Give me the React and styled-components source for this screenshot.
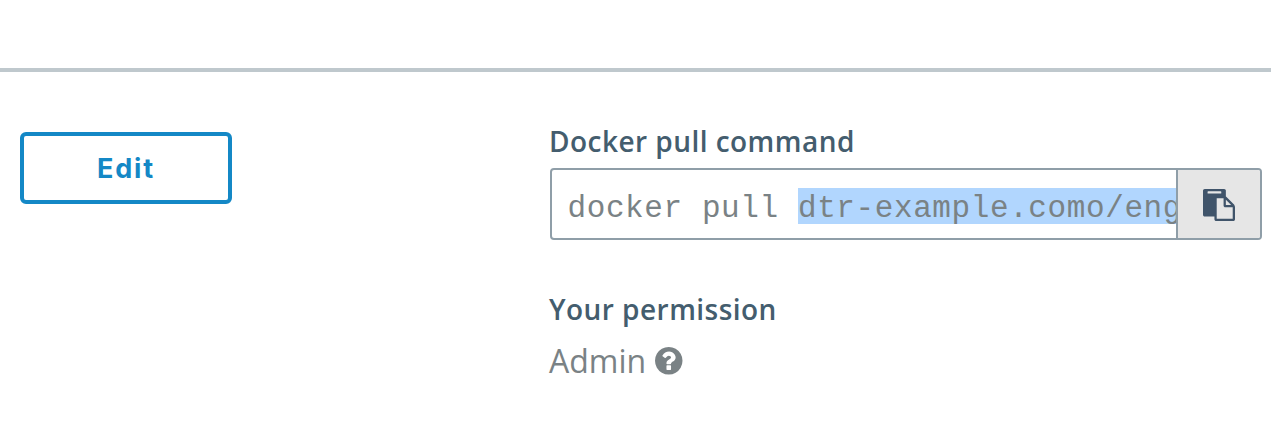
import React from "react";
import styled, { createGlobalStyle } from "styled-components";

const GlobalStyle = createGlobalStyle`
  *, *::before, *::after { box-sizing: border-box; }
  body { margin: 0; background: #fff; font-family: "Open Sans", sans-serif; }
`;

const Page = styled.div`
  height: 435px;
  overflow: hidden;
  background: #fff;
`;

const Header = styled.header`
  height: 72px;
  border-bottom: 4px solid #bfc8cd;
`;

const Content = styled.main`
  display: grid;
  grid-template-columns: 530px 712px;
  padding: 51px 0 0 20px;
`;

const EditButton = styled.button`
  width: 212px;
  height: 72px;
  margin-top: 9px;
  padding: 1px 0 0;
  border: 4px solid #1488c6;
  border-radius: 6px;
  background: #fff;
  color: #1488c6;
  font: 700 27px/63px Inter, sans-serif;
  letter-spacing: 1.8px;
`;

const Details = styled.section`
  display: flex;
  flex-direction: column;
`;

const Label = styled.h2`
  margin: 0 0 0 -1px;
  height: ${(p) => p.$height}px;
  color: #445d6e;
  font-size: 28px;
  font-weight: 600;
  line-height: 36px;
  letter-spacing: 0.46px;
  white-space: nowrap;
`;

const CommandBox = styled.div`
  display: flex;
  height: 72px;
  margin-bottom: 51px;
  border: 2px solid #8f9ea8;
  border-radius: 4px;
  overflow: hidden;
`;

const Command = styled.code`
  flex: 1;
  min-width: 0;
  padding: 18px 0 0 15.5px;
  overflow: hidden;
  color: #7a8285;
  font: 31px/42px "Liberation Mono", "Courier New", monospace;
  letter-spacing: 0.6px;
  white-space: pre;
`;

const Selected = styled.span`
  display: inline-block;
  height: 36px;
  background: #b1d6fe;
  vertical-align: top;
`;

const CopyButton = styled.button`
  display: flex;
  align-items: center;
  justify-content: center;
  width: 84px;
  padding: 1px 0 0;
  border: 0;
  border-left: 2px solid #8f9ea8;
  background: #e6e6e6;
  color: #40546a;
`;

const Permission = styled.div`
  display: flex;
  align-items: center;
  gap: 9px;
  height: 46px;
  margin-left: -1px;
  color: #7a8285;
  font-size: 32px;
  line-height: 44px;
`;

const Icon = styled.svg`
  display: block;
  width: ${(p) => p.$size}px;
  height: ${(p) => p.$size}px;
  fill: currentColor;
`;

const PasteIcon = () => (
  <Icon $size={32} viewBox="0 0 1792 1792" aria-hidden="true">
    <path d="M768 1664h896v-640h-416q-40 0-68-28t-28-68v-416h-384v1152zm256-1440v-64q0-13-9.5-22.5t-22.5-9.5h-704q-13 0-22.5 9.5t-9.5 22.5v64q0 13 9.5 22.5t22.5 9.5h704q13 0 22.5-9.5t9.5-22.5zm256 672h299l-299-299v299zm512 128v672q0 40-28 68t-68 28h-960q-40 0-68-28t-28-68v-160h-544q-40 0-68-28t-28-68v-1344q0-40 28-68t68-28h1088q40 0 68 28t28 68v328q21 13 36 28l408 408q28 28 48 76t20 88z" />
  </Icon>
);

const HelpIcon = () => (
  <Icon $size={27.5} viewBox="128 128 1536 1536" aria-hidden="true">
    <path d="M1024 1376v-192q0-14-9-23t-23-9h-192q-14 0-23 9t-9 23v192q0 14 9 23t23 9h192q14 0 23-9t9-23zm256-672q0-88-55.5-163t-138.5-116-170-41q-243 0-371 213-15 24 8 42l132 100q7 6 19 6 16 0 25-12 53-68 86-92 34-24 86-24 48 0 85.5 26t37.5 59q0 38-20 61t-68 45q-63 28-115.5 86.5t-52.5 125.5v36q0 14 9 23t23 9h192q14 0 23-9t9-23q0-19 21.5-49.5t54.5-49.5q32-18 49-28.5t46-35 44.5-48 28-60.5 12.5-81zm384 192q0 209-103 385.5t-279.5 279.5-385.5 103-385.5-103-279.5-279.5-103-385.5 103-385.5 279.5-279.5 385.5-103 385.5 103 279.5 279.5 103 385.5z" />
  </Icon>
);

export default function App() {
  return (
    <Page>
      <GlobalStyle />
      <Header />
      <Content>
        <div>
          <EditButton type="button">Edit</EditButton>
        </div>
        <Details>
          <Label $height={45}>Docker pull command</Label>
          <CommandBox>
            <Command>
              docker pull <Selected>dtr-example.como/eng</Selected>
            </Command>
            <CopyButton type="button" aria-label="Copy command">
              <PasteIcon />
            </CopyButton>
          </CommandBox>
          <Label $height={47}>Your permission</Label>
          <Permission>
            Admin
            <HelpIcon />
          </Permission>
        </Details>
      </Content>
    </Page>
  );
}
